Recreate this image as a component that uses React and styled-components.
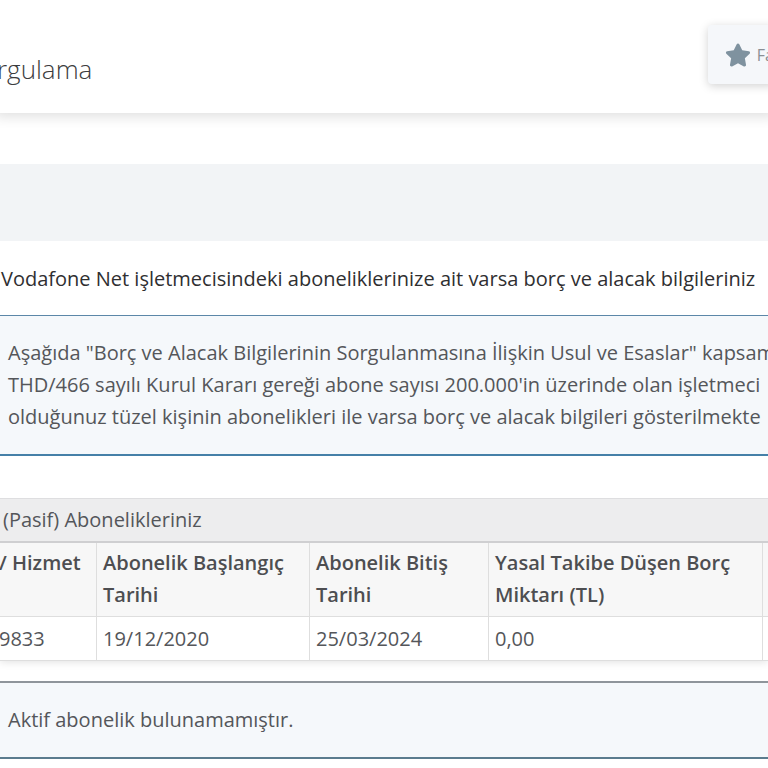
import React from 'react';
import styled, { createGlobalStyle } from 'styled-components';
import { FaStar } from 'react-icons/fa';

const GlobalStyle = createGlobalStyle`
  * {
    box-sizing: border-box;
  }

  body {
    margin: 0;
    background: #fff;
    color: #54565a;
    font-family: 'Open Sans', 'Noto Sans', sans-serif;
    font-size: 20px;
    line-height: 32px;
    overflow-x: hidden;
  }
`;

const Page = styled.div`
  overflow: hidden;
`;

const Header = styled.header`
  display: flex;
  align-items: flex-start;
  justify-content: space-between;
  margin: 0 -6px 0 -3px;
  padding: 25px 0 28px;
  box-shadow: 0 2px 12px 2px rgba(0, 0, 0, 0.12);
`;

const Title = styled.h1`
  margin: 0;
  padding-top: 28px;
  color: #3c3c3e;
  font-size: 26px;
  font-weight: 300;
  line-height: 32px;
`;

const FavoriteButton = styled.button`
  display: flex;
  align-items: center;
  gap: 6px;
  height: 59px;
  padding: 0 0 0 17px;
  border: 0;
  border-radius: 4px 0 0 4px;
  background: #f5f7fa;
  box-shadow: 0 2px 10px rgba(0, 0, 0, 0.18);
  color: #8a8f94;
  font-family: inherit;
  font-size: 16px;
  white-space: nowrap;

  svg {
    color: #7f929f;
  }
`;

const Band = styled.div`
  height: 77px;
  margin-top: 51px;
  background: #f2f4f6;
`;

const Intro = styled.p`
  margin: 22px 0 20px;
  padding-left: 1px;
  color: #2f2f31;
  white-space: nowrap;
`;

const InfoBox = styled.section`
  padding: 21px 0 21px 8px;
  border-top: ${(props) => props.$top};
  border-bottom: 2px solid ${(props) => props.$bottom};
  background: #f5f8fb;
  white-space: nowrap;
`;

const TableArea = styled.div`
  margin: 42px 0 20px;
`;

const Table = styled.table`
  width: 100%;
  table-layout: fixed;
  border-collapse: separate;
  border-spacing: 0;
  box-shadow: 0 1px 8px rgba(0, 0, 0, 0.12);
`;

const Caption = styled.caption`
  padding: 5px 3px;
  border-top: 1px solid #dedee0;
  border-bottom: 2px solid #cfcfd1;
  background: #ededee;
  text-align: left;
`;

const Col = styled.col`
  width: ${(props) => props.$width};
`;

const HeadCell = styled.th`
  padding: 4px 6px 5px;
  border-right: 1px solid #dedede;
  border-bottom: 1px solid #dedede;
  background: #f7f7f7;
  color: #4d4e51;
  font-weight: 600;
  text-align: left;
  vertical-align: top;

  &:last-child {
    border-right: 0;
  }
`;

const Cell = styled.td`
  padding: 6px 6px 5px;
  border-right: 1px solid #dedede;
  border-bottom: 1px solid #dedede;

  &:last-child {
    border-right: 0;
  }
`;

// first column runs up to the left edge of the scrolled table
const EdgeText = styled.span`
  display: block;
  margin-left: -7px;
`;

const columns = [
  { title: '/ Hizmet', value: '9833', width: '97px' },
  { title: 'Abonelik Başlangıç Tarihi', value: '19/12/2020', width: '213px' },
  { title: 'Abonelik Bitiş Tarihi', value: '25/03/2024', width: '179px' },
  { title: 'Yasal Takibe Düşen Borç Miktarı (TL)', value: '0,00', width: '274px' },
  { title: '', value: '', width: 'auto' },
];

const App = () => {
  return (
    <Page>
      <GlobalStyle />
      <Header>
        <Title>rgulama</Title>
        <FavoriteButton type="button">
          <FaStar size={26} aria-hidden="true" />
          Fa
        </FavoriteButton>
      </Header>
      <main>
        <Band />
        <Intro>
          Vodafone Net işletmecisindeki aboneliklerinize ait varsa borç ve alacak bilgileriniz
        </Intro>
        <InfoBox $top="1px solid #5c87a8" $bottom="#4580a8">
          Aşağıda "Borç ve Alacak Bilgilerinin Sorgulanmasına İlişkin Usul ve Esaslar" kapsam
          <br />
          THD/466 sayılı Kurul Kararı gereği abone sayısı 200.000'in üzerinde olan işletmeci
          <br />
          olduğunuz tüzel kişinin abonelikleri ile varsa borç ve alacak bilgileri gösterilmekte
        </InfoBox>
        <TableArea>
          <Table>
            <Caption>(Pasif) Abonelikleriniz</Caption>
            <colgroup>
              {columns.map((col, i) => (
                <Col key={i} $width={col.width} />
              ))}
            </colgroup>
            <thead>
              <tr>
                {columns.map((col, i) => (
                  <HeadCell key={i} scope="col">
                    {i === 0 ? <EdgeText>{col.title}</EdgeText> : col.title}
                  </HeadCell>
                ))}
              </tr>
            </thead>
            <tbody>
              <tr>
                {columns.map((col, i) => (
                  <Cell key={i}>
                    {i === 0 ? <EdgeText>{col.value}</EdgeText> : col.value}
                  </Cell>
                ))}
              </tr>
            </tbody>
          </Table>
        </TableArea>
        <InfoBox $top="2px solid #8f959b" $bottom="#5b7c8e">
          Aktif abonelik bulunamamıştır.
        </InfoBox>
      </main>
    </Page>
  );
};

export default App;
